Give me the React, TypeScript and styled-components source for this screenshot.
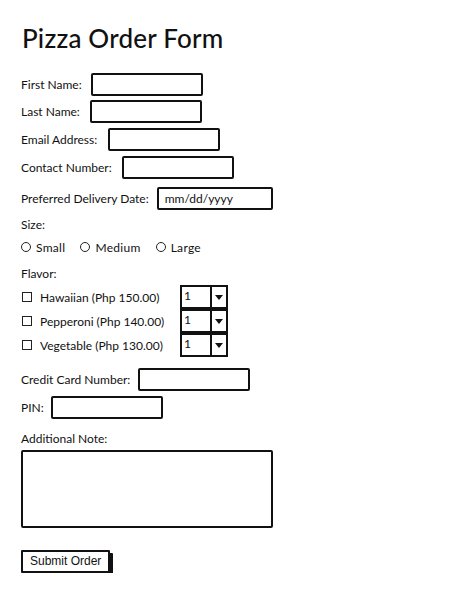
import React from 'react';
import styled, { createGlobalStyle } from 'styled-components';

const GlobalStyle = createGlobalStyle`
  body {
    margin: 0;
    background: #ffffff;
    font-family: 'Lato', 'Noto Sans', sans-serif;
    color: #111111;
  }
`;

const Page = styled.form`
  width: 464px;
  padding: 22px 0 0 21px;
  box-sizing: border-box;
`;

const Title = styled.h1`
  margin: 0 0 19px 1px;
  font-size: 26px;
  line-height: 32px;
  font-weight: 500;
  letter-spacing: 0.2px;
`;

const Row = styled.div<{ $gap?: number }>`
  display: flex;
  align-items: center;
  height: 23px;
  margin-bottom: ${(p) => p.$gap ?? 5}px;
`;

const Label = styled.label<{ $space?: number }>`
  font-size: 12px;
  margin-right: ${(p) => p.$space ?? 8}px;
  white-space: nowrap;
`;

const Heading = styled.div<{ $gap?: number }>`
  font-size: 12px;
  height: 16px;
  line-height: 16px;
  margin-bottom: ${(p) => p.$gap ?? 6}px;
`;

const Input = styled.input<{ $width?: number }>`
  width: ${(p) => p.$width ?? 112}px;
  height: 23px;
  box-sizing: border-box;
  border: 2px solid #111111;
  border-radius: 2px;
  padding: 0 6px;
  font-family: inherit;
  font-size: 12px;
  color: #111111;
  outline: none;
  &::placeholder {
    color: #111111;
  }
`;

const Radios = styled.div`
  display: flex;
  align-items: center;
  height: 16px;
  margin-bottom: 11px;
  gap: 15px;
`;

const Option = styled.label`
  display: flex;
  align-items: center;
  gap: 5px;
  font-size: 12px;
  letter-spacing: 0.3px;
`;

const Circle = styled.span`
  width: 10px;
  height: 10px;
  border: 1px solid #222222;
  border-radius: 50%;
  box-sizing: border-box;
`;

const Flavors = styled.div`
  display: grid;
  grid-template-columns: 159px 48px;
  margin-bottom: 11px;
`;

const FlavorLabel = styled.label`
  display: flex;
  align-items: center;
  gap: 8px;
  font-size: 12px;
  height: 24px;
  padding-left: 1px;
`;

const Box = styled.span`
  width: 10px;
  height: 10px;
  border: 1px solid #222222;
  box-sizing: border-box;
`;

const Select = styled.div`
  display: flex;
  height: 24px;
  box-sizing: border-box;
  border: 2px solid #111111;
  background: #ffffff;
`;

const SelectValue = styled.span`
  flex: 1;
  font-size: 12px;
  line-height: 18px;
  padding-left: 2px;
  border-right: 2px solid #111111;
`;

const Arrow = styled.span`
  width: 14px;
  display: flex;
  align-items: center;
  justify-content: center;
  &::after {
    content: '';
    border-left: 4px solid transparent;
    border-right: 4px solid transparent;
    border-top: 5px solid #111111;
  }
`;

const Note = styled.textarea`
  display: block;
  width: 252px;
  height: 78px;
  box-sizing: border-box;
  border: 2px solid #111111;
  border-radius: 2px;
  resize: none;
  margin: 0 0 21px 0;
  outline: none;
`;

const Submit = styled.button`
  font-family: 'Liberation Sans', Arial, sans-serif;
  font-size: 12px;
  color: #111111;
  background: #ffffff;
  border: 2px solid #111111;
  box-shadow: 3px 3px 0 #111111;
  height: 23px;
  padding: 0 7px;
  border-radius: 1px;
`;

const flavors = [
  'Hawaiian (Php 150.00)',
  'Pepperoni (Php 140.00)',
  'Vegetable (Php 130.00)',
];

function App() {
  return (
    <>
      <GlobalStyle />
      <Page onSubmit={(e) => e.preventDefault()}>
        <Title>Pizza Order Form</Title>
        <Row $gap={4}>
          <Label $space={9}>First Name:</Label>
          <Input />
        </Row>
        <Row>
          <Label $space={10}>Last Name:</Label>
          <Input />
        </Row>
        <Row>
          <Label $space={11}>Email Address:</Label>
          <Input />
        </Row>
        <Row $gap={8}>
          <Label $space={10}>Contact Number:</Label>
          <Input />
        </Row>
        <Row $gap={7}>
          <Label>Preferred Delivery Date:</Label>
          <Input $width={116} placeholder="mm/dd/yyyy" />
        </Row>
        <Heading>Size:</Heading>
        <Radios>
          <Option><Circle />Small</Option>
          <Option><Circle />Medium</Option>
          <Option><Circle />Large</Option>
        </Radios>
        <Heading $gap={3}>Flavor:</Heading>
        <Flavors>
          <div>
            {flavors.map((f) => (
              <FlavorLabel key={f}>
                <Box />
                {f}
              </FlavorLabel>
            ))}
          </div>
          <div>
            {flavors.map((f) => (
              <Select key={f}>
                <SelectValue>1</SelectValue>
                <Arrow />
              </Select>
            ))}
          </div>
        </Flavors>
        <Row>
          <Label>Credit Card Number:</Label>
          <Input />
        </Row>
        <Row $gap={12}>
          <Label $space={7}>PIN:</Label>
          <Input />
        </Row>
        <Heading $gap={3}>Additional Note:</Heading>
        <Note />
        <Submit type="submit">Submit Order</Submit>
      </Page>
    </>
  );
}

export default App;
